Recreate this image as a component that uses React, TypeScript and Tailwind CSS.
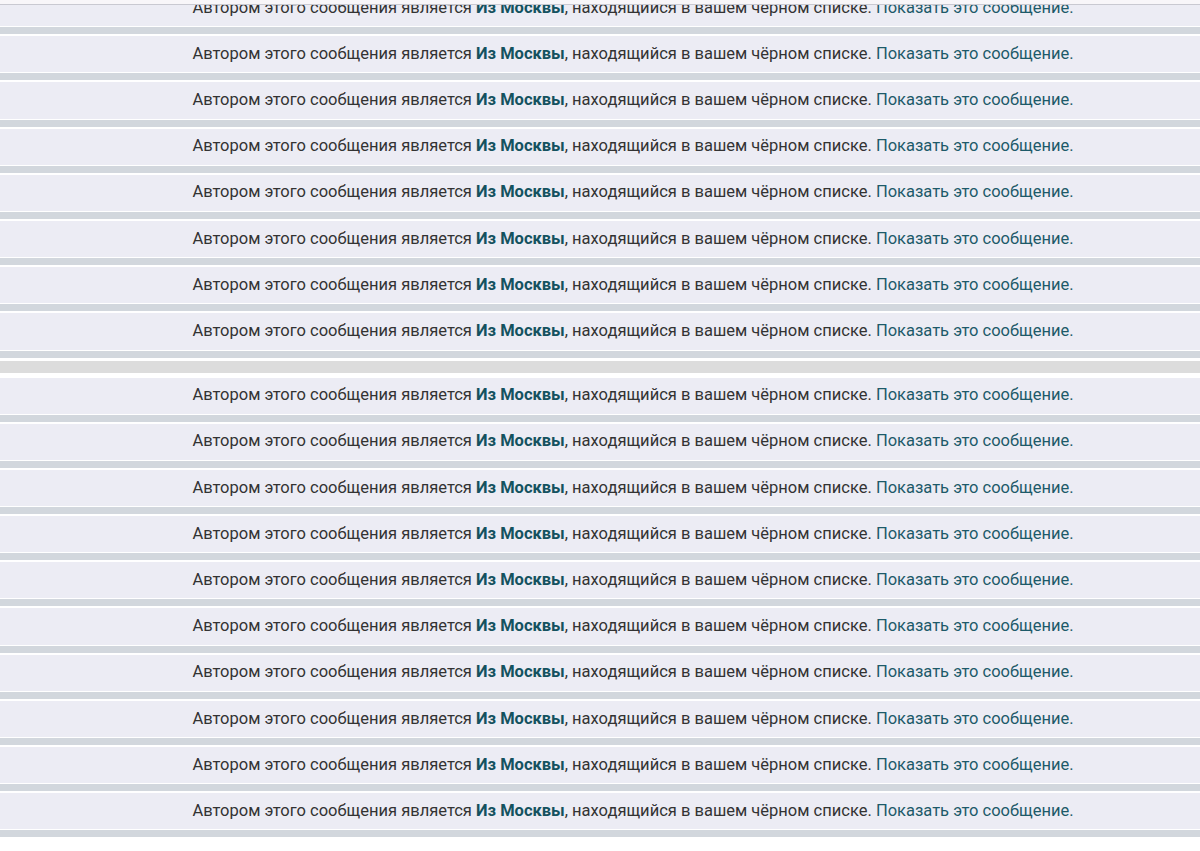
const BEFORE = 8;
const AFTER = 10;

function Separator() {
  return (
    <div>
      <div className="h-px bg-white" />
      <div className="h-[7px] bg-[#d2d7dd]" />
      <div className="h-[2px] bg-white" />
    </div>
  );
}

function HiddenPost() {
  return (
    <div>
      <div className="h-[36.2px] bg-[#ececf4] flex items-center justify-center pl-[66px] text-[16.5px] text-[#333] whitespace-nowrap">
        <span>
          Автором этого сообщения является{' '}
          <a className="font-bold text-[#14525f]">Из Москвы</a>, находящийся в вашем чёрном списке.{' '}
          <a className="text-[#1d5a69]">Показать это сообщение.</a>
        </span>
      </div>
      <Separator />
    </div>
  );
}

export default function App() {
  return (
    <div className="relative h-[851px] overflow-hidden bg-white" style={{ fontFamily: 'Roboto, "Noto Sans", sans-serif' }}>
      {/* sticky top edge */}
      <div className="absolute top-0 left-0 right-0 z-10 h-[5px] bg-[#f8f6f9] border-b border-[#c9c9d1]" />

      <div className="-mt-[10px]">
        {Array.from({ length: BEFORE }).map((_, i) => (
          <HiddenPost key={`a${i}`} />
        ))}
        <div className="h-px bg-white" />
        <div className="h-[12px] bg-[#dcdcdc]" />
        <div className="h-[5px] bg-white" />
        {Array.from({ length: AFTER }).map((_, i) => (
          <HiddenPost key={`b${i}`} />
        ))}
      </div>
    </div>
  );
}
